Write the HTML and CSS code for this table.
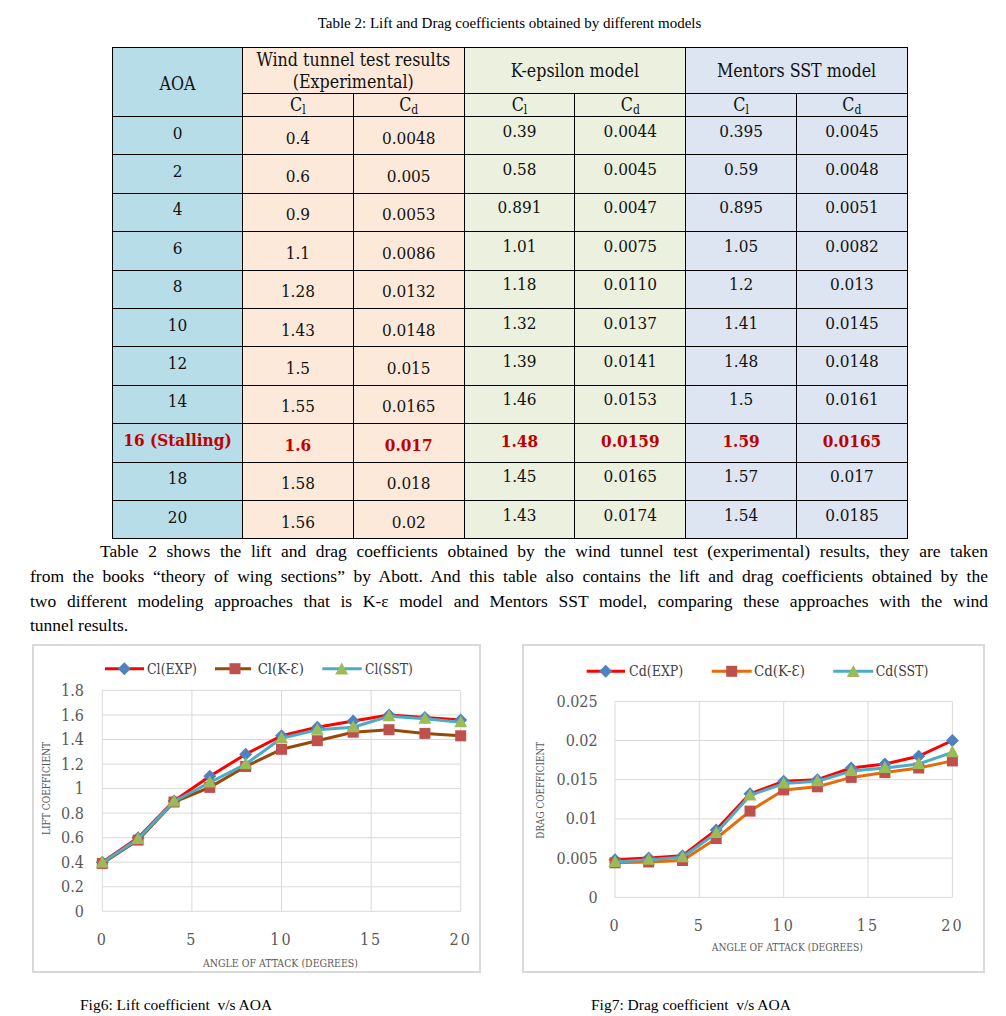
FILE: index.html
```html
<!DOCTYPE html>
<html>
<head>
<meta charset="utf-8">
<title>Lift and Drag coefficients</title>
<link rel="stylesheet" href="styles.css">
</head>
<body>
<div class="caption">Table 2: Lift and Drag coefficients obtained by different models</div>
<table class="data">
  <colgroup><col class="c-aoa"><col class="c-v"><col class="c-v"><col class="c-v"><col class="c-v"><col class="c-v"><col class="c-v"></colgroup>
  <thead>
    <tr class="h1">
      <th rowspan="2" class="aoa"><span class="hd-aoa">AOA</span></th>
      <th colspan="2" class="exp grp">Wind tunnel test results<br>(Experimental)</th>
      <th colspan="2" class="kep grp">K-epsilon model</th>
      <th colspan="2" class="sst grp">Mentors SST model</th>
    </tr>
    <tr class="h2">
      <th class="exp">C<sub>l</sub></th><th class="exp">C<sub>d</sub></th>
      <th class="kep">C<sub>l</sub></th><th class="kep">C<sub>d</sub></th>
      <th class="sst">C<sub>l</sub></th><th class="sst">C<sub>d</sub></th>
    </tr>
  </thead>
  <tbody>
    <tr><td class="aoa"><span>0</span></td><td class="exp"><span>0.4</span></td><td class="exp"><span>0.0048</span></td><td class="kep"><span>0.39</span></td><td class="kep"><span>0.0044</span></td><td class="sst"><span>0.395</span></td><td class="sst"><span>0.0045</span></td></tr>
    <tr><td class="aoa"><span>2</span></td><td class="exp"><span>0.6</span></td><td class="exp"><span>0.005</span></td><td class="kep"><span>0.58</span></td><td class="kep"><span>0.0045</span></td><td class="sst"><span>0.59</span></td><td class="sst"><span>0.0048</span></td></tr>
    <tr><td class="aoa"><span>4</span></td><td class="exp"><span>0.9</span></td><td class="exp"><span>0.0053</span></td><td class="kep"><span>0.891</span></td><td class="kep"><span>0.0047</span></td><td class="sst"><span>0.895</span></td><td class="sst"><span>0.0051</span></td></tr>
    <tr><td class="aoa"><span>6</span></td><td class="exp"><span>1.1</span></td><td class="exp"><span>0.0086</span></td><td class="kep"><span>1.01</span></td><td class="kep"><span>0.0075</span></td><td class="sst"><span>1.05</span></td><td class="sst"><span>0.0082</span></td></tr>
    <tr><td class="aoa"><span>8</span></td><td class="exp"><span>1.28</span></td><td class="exp"><span>0.0132</span></td><td class="kep"><span>1.18</span></td><td class="kep"><span>0.0110</span></td><td class="sst"><span>1.2</span></td><td class="sst"><span>0.013</span></td></tr>
    <tr><td class="aoa"><span>10</span></td><td class="exp"><span>1.43</span></td><td class="exp"><span>0.0148</span></td><td class="kep"><span>1.32</span></td><td class="kep"><span>0.0137</span></td><td class="sst"><span>1.41</span></td><td class="sst"><span>0.0145</span></td></tr>
    <tr><td class="aoa"><span>12</span></td><td class="exp"><span>1.5</span></td><td class="exp"><span>0.015</span></td><td class="kep"><span>1.39</span></td><td class="kep"><span>0.0141</span></td><td class="sst"><span>1.48</span></td><td class="sst"><span>0.0148</span></td></tr>
    <tr><td class="aoa"><span>14</span></td><td class="exp"><span>1.55</span></td><td class="exp"><span>0.0165</span></td><td class="kep"><span>1.46</span></td><td class="kep"><span>0.0153</span></td><td class="sst"><span>1.5</span></td><td class="sst"><span>0.0161</span></td></tr>
    <tr class="stall"><td class="aoa"><span>16 (Stalling)</span></td><td class="exp"><span>1.6</span></td><td class="exp"><span>0.017</span></td><td class="kep"><span>1.48</span></td><td class="kep"><span>0.0159</span></td><td class="sst"><span>1.59</span></td><td class="sst"><span>0.0165</span></td></tr>
    <tr><td class="aoa"><span>18</span></td><td class="exp"><span>1.58</span></td><td class="exp"><span>0.018</span></td><td class="kep"><span>1.45</span></td><td class="kep"><span>0.0165</span></td><td class="sst"><span>1.57</span></td><td class="sst"><span>0.017</span></td></tr>
    <tr><td class="aoa"><span>20</span></td><td class="exp"><span>1.56</span></td><td class="exp"><span>0.02</span></td><td class="kep"><span>1.43</span></td><td class="kep"><span>0.0174</span></td><td class="sst"><span>1.54</span></td><td class="sst"><span>0.0185</span></td></tr>
  </tbody>
</table>

<div class="para">
  <span class="ln first">Table 2 shows the lift and drag coefficients obtained by the wind tunnel test (experimental) results, they are taken</span>
  <span class="ln">from the books “theory of wing sections” by Abott. And this table also contains the lift and drag coefficients obtained by the</span>
  <span class="ln">two different modeling approaches that is K-ε model and Mentors SST model, comparing these approaches with the wind</span>
  <span class="ln last">tunnel results.</span>
</div>

<div class="charts">
  <div class="chart">
    <svg viewBox="34 644 445 324" width="445" height="324">
      <defs>
        <path id="dia" d="M0,-6.5L6.5,0L0,6.5L-6.5,0Z" fill="#4f81bd"/>
        <rect id="sq" x="-5.5" y="-5.5" width="11" height="11" fill="#c0504d"/>
        <path id="tri" d="M0,-7L6.5,5L-6.5,5Z" fill="#9bbb59"/>
      </defs>
      <g class="grid">
        <line x1="102.3" y1="909.3" x2="460.7" y2="909.3"/>
        <line x1="102.3" y1="884.8" x2="460.7" y2="884.8"/>
        <line x1="102.3" y1="860.2" x2="460.7" y2="860.2"/>
        <line x1="102.3" y1="835.7" x2="460.7" y2="835.7"/>
        <line x1="102.3" y1="811.1" x2="460.7" y2="811.1"/>
        <line x1="102.3" y1="786.6" x2="460.7" y2="786.6"/>
        <line x1="102.3" y1="762.1" x2="460.7" y2="762.1"/>
        <line x1="102.3" y1="737.5" x2="460.7" y2="737.5"/>
        <line x1="102.3" y1="713" x2="460.7" y2="713"/>
        <line x1="102.3" y1="688.4" x2="460.7" y2="688.4"/>
        <line x1="102.3" y1="688.4" x2="102.3" y2="909.3"/>
        <line x1="191.9" y1="688.4" x2="191.9" y2="909.3"/>
        <line x1="281.5" y1="688.4" x2="281.5" y2="909.3"/>
        <line x1="371.1" y1="688.4" x2="371.1" y2="909.3"/>
        <line x1="460.7" y1="688.4" x2="460.7" y2="909.3"/>
      </g>
      <g class="ylab">
        <text x="84" y="914.8">0</text>
        <text x="84" y="890.3">0.2</text>
        <text x="84" y="865.7">0.4</text>
        <text x="84" y="841.2">0.6</text>
        <text x="84" y="816.6">0.8</text>
        <text x="84" y="792.1">1</text>
        <text x="84" y="767.6">1.2</text>
        <text x="84" y="743">1.4</text>
        <text x="84" y="718.5">1.6</text>
        <text x="84" y="693.9">1.8</text>
      </g>
      <g class="xlab">
        <text x="102.3" y="943">0</text>
        <text x="191.9" y="943">5</text>
        <text x="281.5" y="943">10</text>
        <text x="371.1" y="943">15</text>
        <text x="460.7" y="943">20</text>
      </g>
      <text class="atitle" transform="translate(49.5,786.5) rotate(-90)" textLength="93" lengthAdjust="spacingAndGlyphs">LIFT COEFFICIENT</text>
      <text class="atitle" x="280.5" y="965" textLength="155" lengthAdjust="spacingAndGlyphs">ANGLE OF ATTACK (DEGREES)</text>

      <polyline class="ln-exp" points="102.3,860.2 138.1,835.7 174,798.9 209.8,774.3 245.7,752.2 281.5,733.8 317.3,725.3 353.2,719.1 389,713 424.9,715.4 460.7,717.9"/>
      <g>
        <use href="#dia" x="102.3" y="860.2"/><use href="#dia" x="138.1" y="835.7"/><use href="#dia" x="174" y="798.9"/><use href="#dia" x="209.8" y="774.3"/><use href="#dia" x="245.7" y="752.2"/><use href="#dia" x="281.5" y="733.8"/><use href="#dia" x="317.3" y="725.3"/><use href="#dia" x="353.2" y="719.1"/><use href="#dia" x="389" y="713"/><use href="#dia" x="424.9" y="715.4"/><use href="#dia" x="460.7" y="717.9"/>
      </g>
      <polyline class="ln-kl" points="102.3,861.5 138.1,838.1 174,800 209.8,785.4 245.7,764.5 281.5,747.3 317.3,738.7 353.2,730.2 389,727.7 424.9,731.4 460.7,733.8"/>
      <g>
        <use href="#sq" x="102.3" y="861.5"/><use href="#sq" x="138.1" y="838.1"/><use href="#sq" x="174" y="800"/><use href="#sq" x="209.8" y="785.4"/><use href="#sq" x="245.7" y="764.5"/><use href="#sq" x="281.5" y="747.3"/><use href="#sq" x="317.3" y="738.7"/><use href="#sq" x="353.2" y="730.2"/><use href="#sq" x="389" y="727.7"/><use href="#sq" x="424.9" y="731.4"/><use href="#sq" x="460.7" y="733.8"/>
      </g>
      <polyline class="ln-sst" points="102.3,860.8 138.1,836.9 174,799.5 209.8,780.5 245.7,762.1 281.5,736.3 317.3,727.7 353.2,725.3 389,714.2 424.9,716.7 460.7,720.3"/>
      <g>
        <use href="#tri" x="102.3" y="860.8"/><use href="#tri" x="138.1" y="836.9"/><use href="#tri" x="174" y="799.5"/><use href="#tri" x="209.8" y="780.5"/><use href="#tri" x="245.7" y="762.1"/><use href="#tri" x="281.5" y="736.3"/><use href="#tri" x="317.3" y="727.7"/><use href="#tri" x="353.2" y="725.3"/><use href="#tri" x="389" y="714.2"/><use href="#tri" x="424.9" y="716.7"/><use href="#tri" x="460.7" y="720.3"/>
      </g>

      <g class="legend">
        <line class="ln-exp" x1="105" y1="666.7" x2="144" y2="666.7"/>
        <use href="#dia" x="124.3" y="666.7"/>
        <text x="147" y="672.3" textLength="50" lengthAdjust="spacingAndGlyphs">Cl(EXP)</text>
        <line class="ln-kl" x1="215" y1="666.7" x2="251" y2="666.7"/>
        <use href="#sq" x="235" y="666.7"/>
        <text x="257.7" y="672.3" textLength="46.3" lengthAdjust="spacingAndGlyphs">Cl(K-Ɛ)</text>
        <line class="ln-sst" x1="322.3" y1="666.7" x2="361.7" y2="666.7"/>
        <use href="#tri" x="341.7" y="667.5"/>
        <text x="365" y="672.3" textLength="47.7" lengthAdjust="spacingAndGlyphs">Cl(SST)</text>
      </g>
    </svg>
  </div>

  <div class="chart">
    <svg viewBox="524 644 459 325" width="459" height="325">
      <g class="grid">
        <line x1="615" y1="895.3" x2="952.4" y2="895.3"/>
        <line x1="615" y1="856.1" x2="952.4" y2="856.1"/>
        <line x1="615" y1="816.9" x2="952.4" y2="816.9"/>
        <line x1="615" y1="777.7" x2="952.4" y2="777.7"/>
        <line x1="615" y1="738.5" x2="952.4" y2="738.5"/>
        <line x1="615" y1="699.3" x2="952.4" y2="699.3"/>
        <line x1="615" y1="699.3" x2="615" y2="895.3"/>
        <line x1="699.3" y1="699.3" x2="699.3" y2="895.3"/>
        <line x1="783.7" y1="699.3" x2="783.7" y2="895.3"/>
        <line x1="868" y1="699.3" x2="868" y2="895.3"/>
        <line x1="952.4" y1="699.3" x2="952.4" y2="895.3"/>
      </g>
      <g class="ylab">
        <text x="597.7" y="900.8">0</text>
        <text x="597.7" y="861.6">0.005</text>
        <text x="597.7" y="822.4">0.01</text>
        <text x="597.7" y="783.2">0.015</text>
        <text x="597.7" y="744">0.02</text>
        <text x="597.7" y="704.8">0.025</text>
      </g>
      <g class="xlab">
        <text x="615" y="929">0</text>
        <text x="699.3" y="929">5</text>
        <text x="783.7" y="929">10</text>
        <text x="868" y="929">15</text>
        <text x="952.4" y="929">20</text>
      </g>
      <text class="atitle" transform="translate(544,788.3) rotate(-90)" textLength="96.7" lengthAdjust="spacingAndGlyphs">DRAG COEFFICIENT</text>
      <text class="atitle" x="787.3" y="949.3" textLength="151" lengthAdjust="spacingAndGlyphs">ANGLE OF ATTACK (DEGREES)</text>

      <polyline class="ln-exp" points="615,857.7 648.7,856.1 682.5,853.7 716.2,827.9 750,791.8 783.7,779.3 817.4,777.7 851.2,766 884.9,762 918.7,754.2 952.4,738.5"/>
      <g>
        <use href="#dia" x="615" y="857.7"/><use href="#dia" x="648.7" y="856.1"/><use href="#dia" x="682.5" y="853.7"/><use href="#dia" x="716.2" y="827.9"/><use href="#dia" x="750" y="791.8"/><use href="#dia" x="783.7" y="779.3"/><use href="#dia" x="817.4" y="777.7"/><use href="#dia" x="851.2" y="766"/><use href="#dia" x="884.9" y="762"/><use href="#dia" x="918.7" y="754.2"/><use href="#dia" x="952.4" y="738.5"/>
      </g>
      <polyline class="ln-kd" points="615,860.8 648.7,860 682.5,858.5 716.2,836.5 750,809.1 783.7,787.9 817.4,784.8 851.2,775.4 884.9,770.6 918.7,766 952.4,758.9"/>
      <g>
        <use href="#sq" x="615" y="860.8"/><use href="#sq" x="648.7" y="860"/><use href="#sq" x="682.5" y="858.5"/><use href="#sq" x="716.2" y="836.5"/><use href="#sq" x="750" y="809.1"/><use href="#sq" x="783.7" y="787.9"/><use href="#sq" x="817.4" y="784.8"/><use href="#sq" x="851.2" y="775.4"/><use href="#sq" x="884.9" y="770.6"/><use href="#sq" x="918.7" y="766"/><use href="#sq" x="952.4" y="758.9"/>
      </g>
      <polyline class="ln-sst" points="615,860 648.7,857.7 682.5,855.3 716.2,831 750,793.4 783.7,781.6 817.4,779.3 851.2,769.1 884.9,766 918.7,762 952.4,750.3"/>
      <g>
        <use href="#tri" x="615" y="860"/><use href="#tri" x="648.7" y="857.7"/><use href="#tri" x="682.5" y="855.3"/><use href="#tri" x="716.2" y="831"/><use href="#tri" x="750" y="793.4"/><use href="#tri" x="783.7" y="781.6"/><use href="#tri" x="817.4" y="779.3"/><use href="#tri" x="851.2" y="769.1"/><use href="#tri" x="884.9" y="766"/><use href="#tri" x="918.7" y="762"/><use href="#tri" x="952.4" y="750.3"/>
      </g>

      <g class="legend">
        <line class="ln-exp" x1="586.7" y1="669.3" x2="625" y2="669.3"/>
        <use href="#dia" x="605.7" y="669.3"/>
        <text x="629" y="674.3" textLength="54.3" lengthAdjust="spacingAndGlyphs">Cd(EXP)</text>
        <line class="ln-kd" x1="711.7" y1="669.3" x2="751.7" y2="669.3"/>
        <use href="#sq" x="731.7" y="669.3"/>
        <text x="754" y="674.3" textLength="51" lengthAdjust="spacingAndGlyphs">Cd(K-Ɛ)</text>
        <line class="ln-sst" x1="833.3" y1="669.3" x2="873.3" y2="669.3"/>
        <use href="#tri" x="853.3" y="670"/>
        <text x="875.7" y="674.3" textLength="52.6" lengthAdjust="spacingAndGlyphs">Cd(SST)</text>
      </g>
    </svg>
  </div>
</div>

<div class="figcaps">
  <span class="fc fc-left">Fig6: Lift coefficient&nbsp; v/s AOA</span>
  <span class="fc">Fig7: Drag coefficient&nbsp; v/s AOA</span>
</div>
</body>
</html>
```

FILE: styles.css
```css
body {
  margin: 0;
  width: 1006px;
  background: #fff;
  color: #000;
  font-family: "Liberation Serif", "Times New Roman", serif;
}

.caption {
  margin: 14px 0 0 112px;
  width: 795px;
  text-align: center;
  font-size: 15px;
  line-height: 18px;
}

table.data {
  margin: 15px 0 0 112px;
  width: 795px;
  border-collapse: collapse;
  table-layout: fixed;
  font-family: "DejaVu Serif Condensed", "DejaVu Serif", serif;
  font-stretch: condensed;
  font-size: 17px;
  color: #111;
}

.c-aoa { width: 130px; }
.c-v { width: 110.8px; }

table.data th,
table.data td {
  border: 1.5px solid #000;
  padding: 0;
  text-align: center;
  font-weight: normal;
  vertical-align: middle;
}

.aoa { background: #b7dde8; }
.exp { background: #fde9d9; }
.kep { background: #ebf1de; }
.sst { background: #dce5f1; }

tr.h1 { height: 46px; }
tr.h2 { height: 23px; }

th.grp {
  vertical-align: top;
  font-size: 17.7px;
  line-height: 22px;
  padding-top: 2px;
}

.hd-aoa { font-size: 17.7px; position: relative; top: 2px; }

tr.h2 th {
  font-size: 17.7px;
  line-height: 21px;
}

th sub {
  font-size: 12px;
  vertical-align: -3px;
  line-height: 0;
}

tbody tr { height: 38.4px; }

tbody td span { display: inline-block; position: relative; }
tbody td.aoa span { top: -3px; }
tbody td.exp span { top: 2px; }
tbody td.kep span,
tbody td.sst span { top: -5px; }

tr.stall td {
  color: #c00000;
  font-weight: bold;
}
tr.stall td.kep span,
tr.stall td.sst span { top: -2px; }

.para {
  margin: 0 0 0 30px;
  width: 958px;
  font-size: 17.5px;
  line-height: 24.7px;
}

.para .ln {
  display: block;
  text-align: justify;
  text-align-last: justify;
}

.para .first { text-indent: 70px; }
.para .last { text-align-last: left; }

.charts {
  display: flex;
  gap: 41px;
  margin-top: 6px;
  padding-left: 32px;
}

.chart {
  border: 2px solid #d9d9d9;
}

.chart svg {
  display: block;
}

.grid line {
  stroke: #d9d9d9;
  stroke-width: 1;
}

.ylab text {
  text-anchor: end;
  font-family: "DejaVu Serif Condensed", "DejaVu Serif", serif;
  font-stretch: condensed;
  font-size: 16px;
  fill: #595959;
}

.xlab text {
  text-anchor: middle;
  font-family: "DejaVu Serif Condensed", "DejaVu Serif", serif;
  font-stretch: condensed;
  font-size: 16px;
  letter-spacing: 2px;
  fill: #595959;
}

.atitle {
  text-anchor: middle;
  font-family: "DejaVu Serif Condensed", "DejaVu Serif", serif;
  font-stretch: condensed;
  font-size: 10.5px;
  fill: #595959;
}

.legend text {
  font-family: "DejaVu Serif Condensed", "DejaVu Serif", serif;
  font-stretch: condensed;
  font-size: 15px;
  fill: #404040;
}

polyline,
.legend line {
  fill: none;
  stroke-width: 3;
  stroke-linejoin: round;
}

.ln-exp { stroke: #ff0000; }
.ln-kl { stroke: #984807; }
.ln-kd { stroke: #e46c0a; }
.ln-sst { stroke: #4bacc6; }

.figcaps {
  display: flex;
  margin-top: 23px;
  padding-left: 80px;
  font-size: 15.5px;
  line-height: 18px;
}

.fc-left {
  width: 511px;
}
```
